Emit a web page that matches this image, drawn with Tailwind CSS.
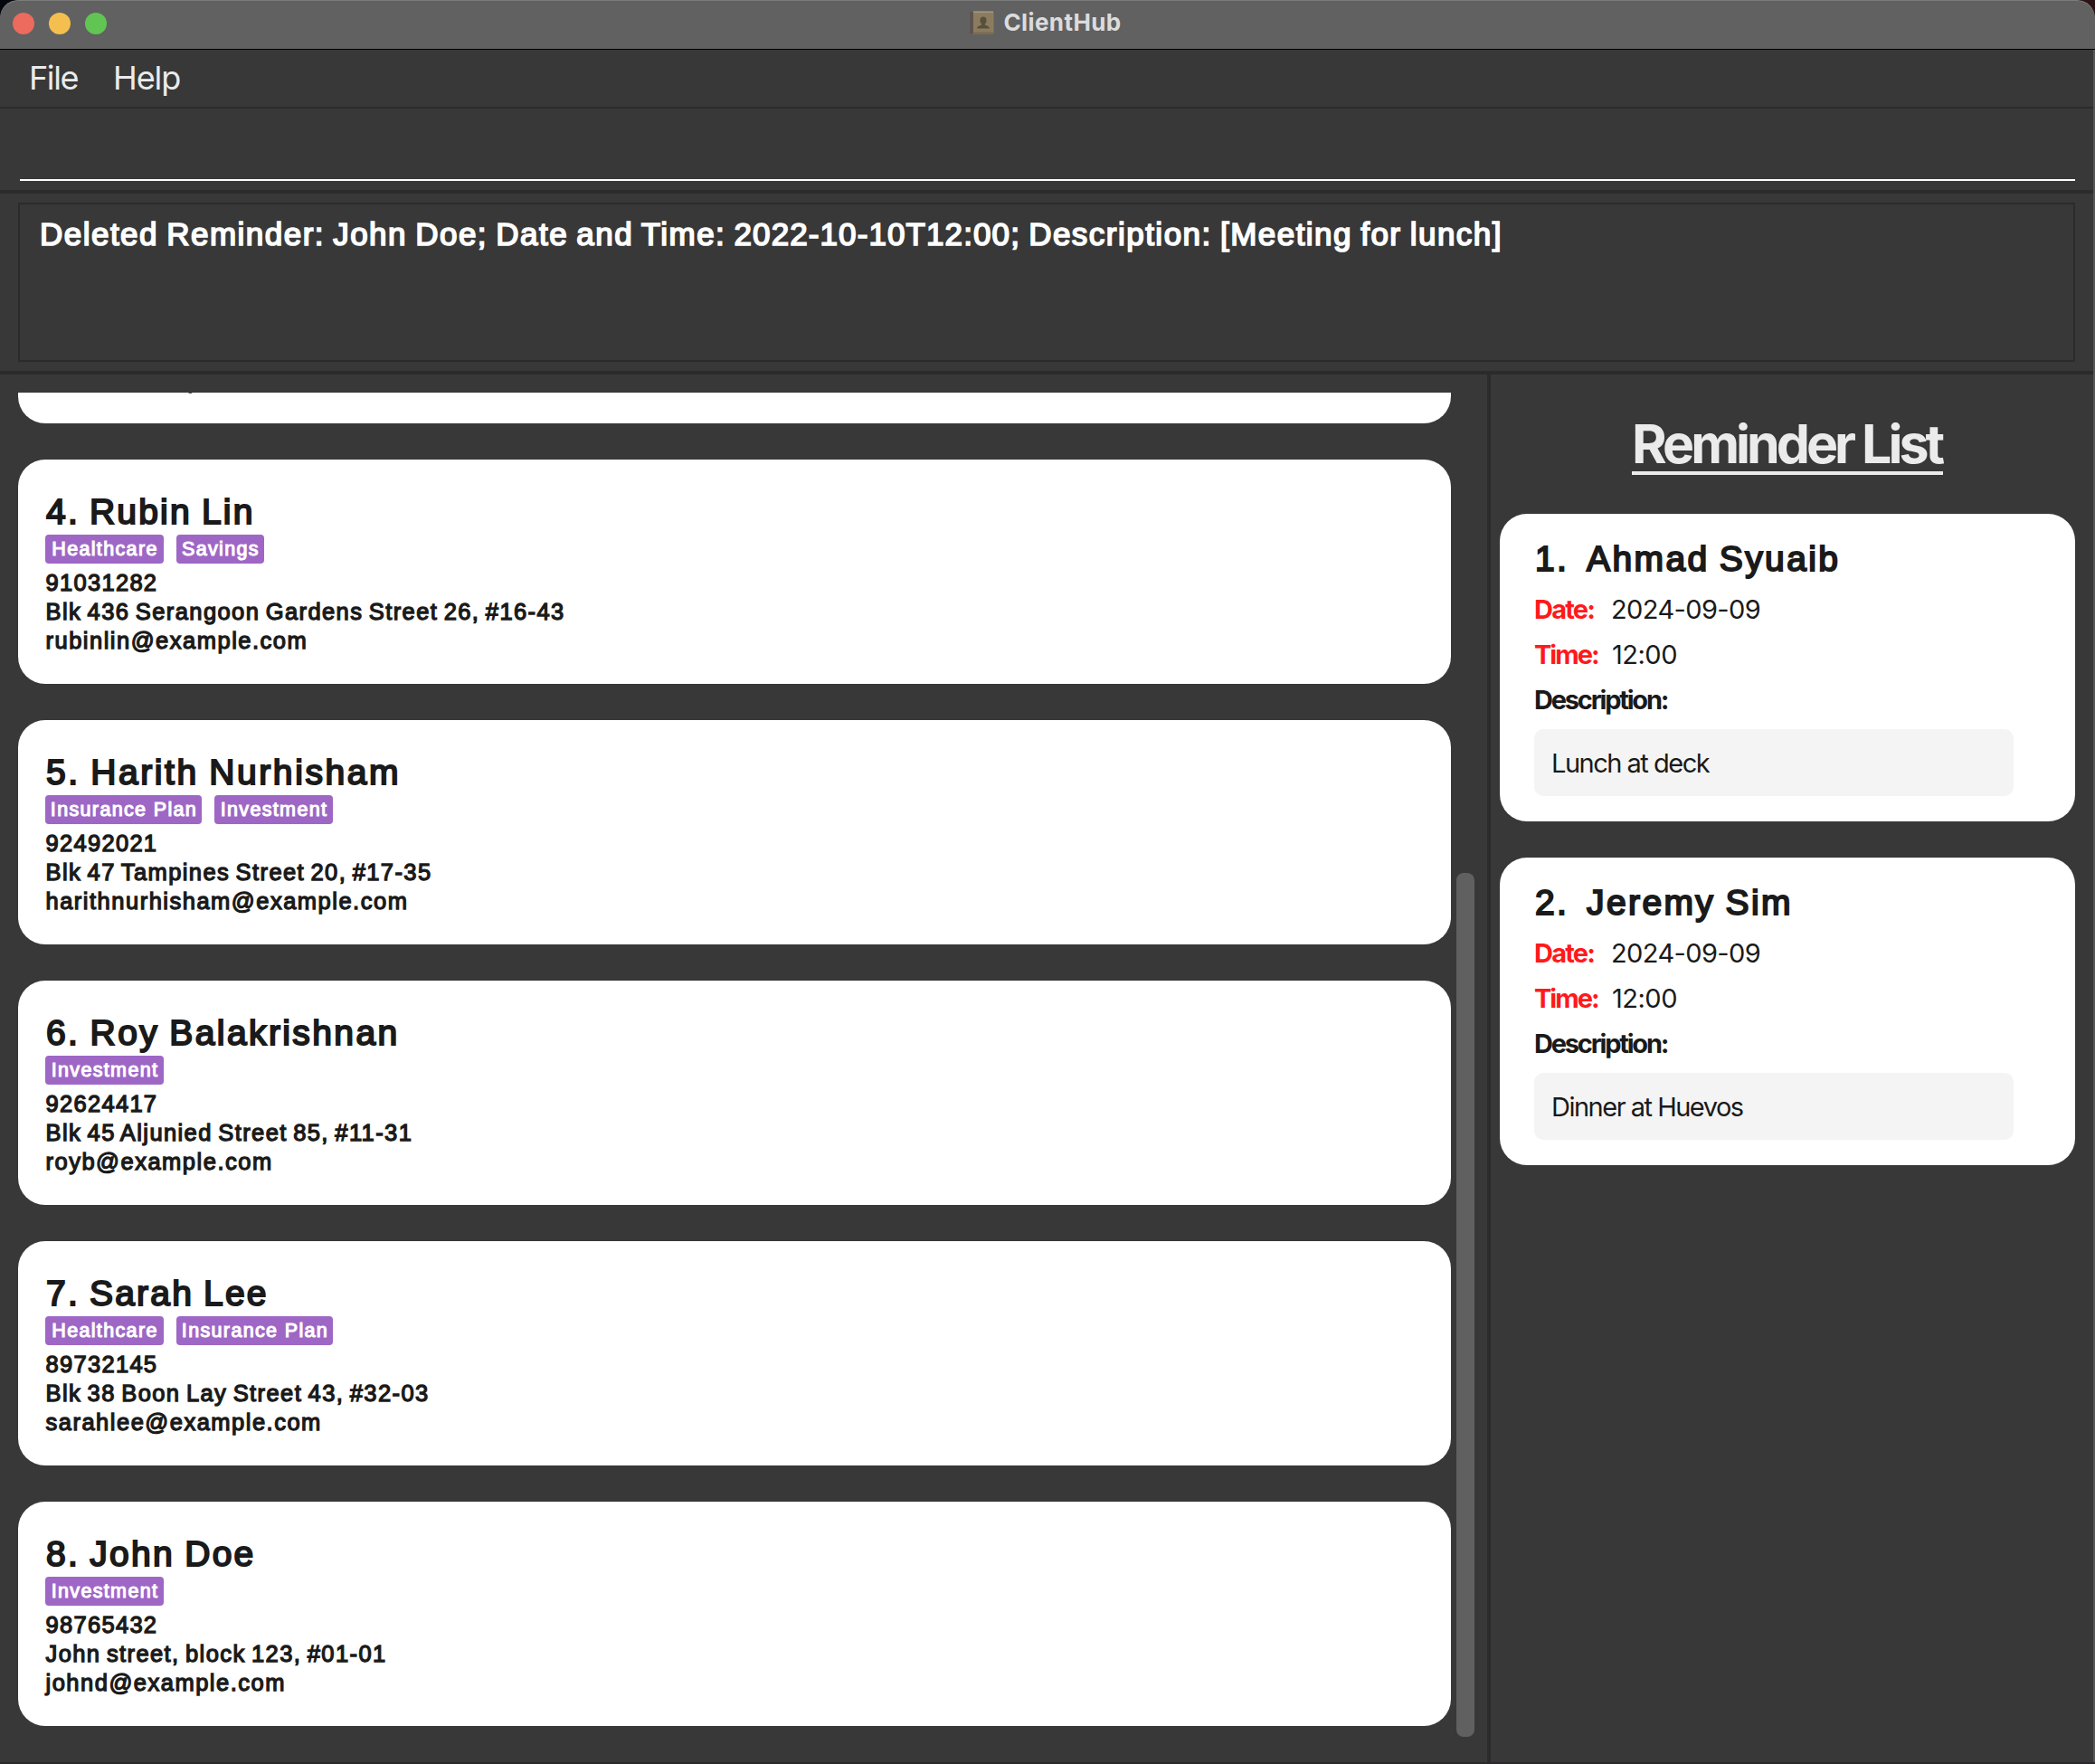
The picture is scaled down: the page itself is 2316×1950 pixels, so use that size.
<!DOCTYPE html>
<html lang="en">
<head>
<meta charset="utf-8">
<title>ClientHub</title>
<script src="https://cdn.jsdelivr.net/npm/@tailwindcss/browser@4"></script>
</head>
<body class="bg-[linear-gradient(90deg,#05070f_50%,#2b1416_50%)]">
<div class="flex h-[1950px] w-[2316px] flex-col overflow-hidden rounded-t-[20px] border-b-2 border-[#2b292b] bg-[#383838]">

  <!-- Title bar -->
  <header class="flex h-[55px] shrink-0 items-center rounded-t-[20px] border-b border-black bg-[#616161] px-[14px] shadow-[inset_0_1px_0_#7c7c7c]">
    <div class="flex w-[400px] gap-4 pb-[2px]">
      <span class="size-6 rounded-full bg-[#ed6a5e]"></span>
      <span class="size-6 rounded-full bg-[#f5bf4f]"></span>
      <span class="size-6 rounded-full bg-[#61c554]"></span>
    </div>
    <div class="flex flex-1 items-center justify-center gap-[10px] pr-[5px] pb-[5px]">
      <svg class="h-[28px] w-[28px]" viewBox="0 0 28 28">
        <rect x="0.5" y="1.5" width="27" height="25" rx="1.5" fill="#8c7c5e"/>
        <rect x="0.5" y="1.5" width="4.5" height="25" rx="1" fill="#5c5450"/>
        <rect x="5" y="1.5" width="22" height="1.6" fill="#a09680"/>
        <rect x="5" y="24.5" width="22" height="2" fill="#7a6c50"/>
        <path d="M16 7.500c2.200 0 3.600 1.600 3.600 3.900 0 1.700-.8 3-1.700 3.900v1.300c1.600.8 4.600 1.300 5.100 3.900H9c.5-2.600 3.500-3.100 5.100-3.900v-1.300c-.9-.9-1.700-2.200-1.700-3.900 0-2.300 1.400-3.900 3.600-3.900z" fill="#57503f"/>
      </svg>
      <h1 class="font-['Inter',sans-serif] text-[26px] leading-[32px] font-bold tracking-[0.4px] text-[#dcdcdc]">ClientHub</h1>
    </div>
    <div class="w-[400px]"></div>
  </header>

  <div class="flex min-h-0 flex-1 flex-col border-r-2 border-[#565656]">
    <!-- Menu bar -->
    <nav class="flex h-[65px] shrink-0 items-center gap-[36px] border-b-2 border-[#2b2b2b] pb-px pl-[32px] font-['Inter',sans-serif] text-[36px] text-[#ebebeb]">
      <span class="w-[57px] tracking-[-1.4px]">File</span>
      <span class="tracking-[-1.1px]">Help</span>
    </nav>

    <!-- Command box -->
    <div class="h-[94px] shrink-0 border-b-4 border-[#2b2b2b] pr-[20px] pl-[22px]">
      <div class="h-[80px] border-b-2 border-white"></div>
    </div>

    <!-- Result display -->
    <div class="h-[200px] shrink-0 border-b-4 border-[#2b2b2b] px-[20px] py-[10px]">
      <div class="h-[176px] border-2 border-[#2b2b2b] pt-[13px] pl-[22px] font-['Liberation_Sans',sans-serif] text-[35px] leading-[40px] tracking-[1.48px] [word-spacing:-2px] whitespace-nowrap text-white [-webkit-text-stroke:1.7px_white]">Deleted Reminder: John Doe; Date and Time: <span class="tracking-[1.1px]">2022-10-10T12:00;</span> Description: [Meeting for lunch]</div>
    </div>

    <main class="flex min-h-0 flex-1">
      <!-- Client list -->
      <section class="flex w-[1648px] shrink-0 border-r-4 border-[#2b2b2b] pt-[20px] pl-[20px]">
        <div class="w-[1584px] overflow-hidden">
          <div id="clients" class="-mt-[214px] flex flex-col gap-[40px]"></div>
        </div>
        <div class="ml-[6px] w-[20px] pt-[531px]">
          <div class="h-[955px] rounded-[8px] bg-[#606060]"></div>
        </div>
      </section>

      <!-- Reminder list -->
      <section class="flex flex-1 flex-col items-center pt-[43px] pr-[10px]">
        <h2 class="h-[68px] w-[344px] border-b-4 border-[#ebebeb] font-['Inter',sans-serif] text-[59px] leading-[68px] font-bold tracking-[-4px] whitespace-nowrap text-[#ebebeb]">Reminder List</h2>
        <div id="reminders" class="mt-[43px] flex w-full flex-col gap-[40px] pr-[10px] pl-[10px]"></div>
      </section>
    </main>
  </div>
</div>

<script>
  // [name, name tracking, [[tag, width]...], phone, address, email]; sizes in px
  const clients = [
    ['3. David Li', 2.1, [['Investment', 131]], '91031283', 'Blk 30 Geylang Street 29, #06-40', 'dave@example.com'],
    ['4. Rubin Lin', 2.2, [['Healthcare', 131], ['Savings', 97]], '91031282', 'Blk 436 Serangoon Gardens Street 26, #16-43', 'rubinlin@example.com'],
    ['5. Harith Nurhisham', 2.6, [['Insurance Plan', 173], ['Investment', 131]], '92492021', 'Blk 47 Tampines Street 20, #17-35', 'harithnurhisham@example.com'],
    ['6. Roy Balakrishnan', 2.4, [['Investment', 131]], '92624417', 'Blk 45 Aljunied Street 85, #11-31', 'royb@example.com'],
    ['7. Sarah Lee', 2.2, [['Healthcare', 131], ['Insurance Plan', 173]], '89732145', 'Blk 38 Boon Lay Street 43, #32-03', 'sarahlee@example.com'],
    ['8. John Doe', 2.3, [['Investment', 131]], '98765432', 'John street, block 123, #01-01', 'johnd@example.com'],
  ];
  document.getElementById('clients').innerHTML = clients.map(([name, ls, tags, phone, address, email]) => `
    <article class="h-[248px] shrink-0 rounded-[30px] bg-white pt-[34px] pl-[30px] font-['Liberation_Sans',sans-serif] whitespace-nowrap text-[#1a1a1a]">
      <h3 class="h-[48px] pl-px text-[39px] leading-[48px] [word-spacing:-2px] [-webkit-text-stroke:2px_#1a1a1a]" style="letter-spacing:${ls}px">${name}</h3>
      <div class="mt-px flex gap-[14px]">
        ${tags.map(([t, w]) => `<span class="h-[32px] rounded-[4px] bg-[#9e67c5] pl-px text-center text-[21.5px] leading-[33px] tracking-[1.35px] text-white [-webkit-text-stroke:1.1px_white]" style="width:${w}px">${t}</span>`).join('')}
      </div>
      <div class="mt-[5px] pl-[0.5px] text-[25.5px] leading-[32px] [-webkit-text-stroke:1.3px_#1a1a1a]">
        <p class="tracking-[1.3px]">${phone}</p>
        <p class="tracking-[1.4px] [word-spacing:-2px]">${address}</p>
        <p class="tracking-[1.5px]">${email}</p>
      </div>
    </article>`).join('');

  const reminders = [
    ['1.', 'Ahmad Syuaib', '2024-09-09', '12:00', 'Lunch at deck'],
    ['2.', 'Jeremy Sim', '2024-09-09', '12:00', 'Dinner at Huevos'],
  ];
  document.getElementById('reminders').innerHTML = reminders.map(([no, name, date, time, text]) => `
    <article class="h-[340px] rounded-[30px] bg-white pt-[26px] pl-[38px] font-['Inter',sans-serif] text-[29px] leading-[50px] whitespace-nowrap text-[#1a1a1a]">
      <h3 class="flex h-[48px] pl-px font-['Liberation_Sans',sans-serif] text-[39px] leading-[48px] tracking-[2.4px] [word-spacing:-2px] [-webkit-text-stroke:2px_#1a1a1a]"><span class="w-[57px]">${no}</span><span>${name}</span></h3>
      <div class="mt-[7px] flex"><span class="w-[85px] font-bold tracking-[-1.8px] text-[#ff1a1a]">Date:</span><span class="tracking-[-0.6px]">${date}</span></div>
      <div class="flex"><span class="w-[86px] font-bold tracking-[-2px] text-[#ff1a1a]">Time:</span><span class="tracking-[-0.5px]">${time}</span></div>
      <div class="font-bold tracking-[-2.2px]">Description:</div>
      <div class="mt-[7px] h-[74px] w-[530px] rounded-[10px] bg-[#f4f4f4] pl-[19px] leading-[76px] tracking-[-1.5px]">${text}</div>
    </article>`).join('');
</script>
</body>
</html>
